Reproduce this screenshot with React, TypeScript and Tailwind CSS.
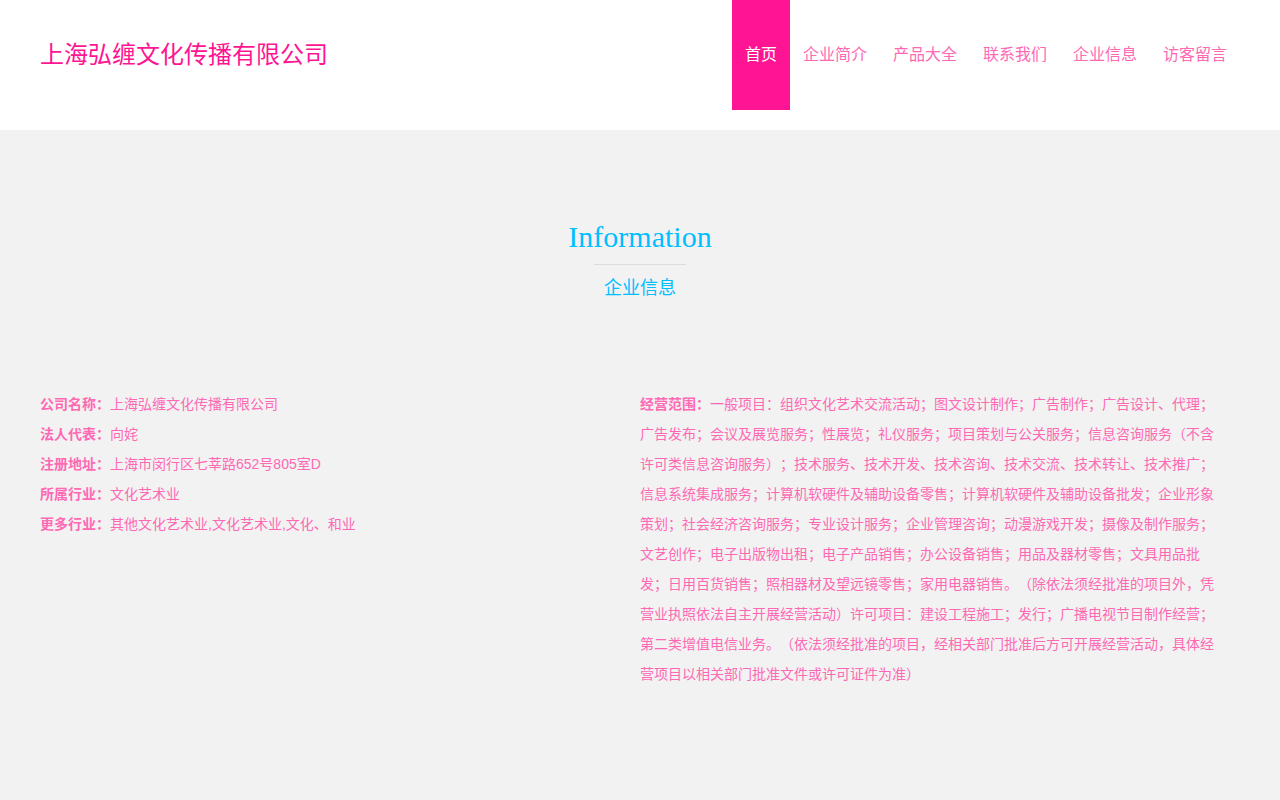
import React from "react";

const nav = ["首页", "企业简介", "产品大全", "联系我们", "企业信息", "访客留言"];

const info = [
  ["公司名称：", "上海弘缠文化传播有限公司"],
  ["法人代表：", "向姹"],
  ["注册地址：", "上海市闵行区七莘路652号805室D"],
  ["所属行业：", "文化艺术业"],
  ["更多行业：", "其他文化艺术业,文化艺术业,文化、和业"],
];

const scope =
  "一般项目：组织文化艺术交流活动；图文设计制作；广告制作；广告设计、代理；广告发布；会议及展览服务；性展览；礼仪服务；项目策划与公关服务；信息咨询服务（不含许可类信息咨询服务）；技术服务、技术开发、技术咨询、技术交流、技术转让、技术推广；信息系统集成服务；计算机软硬件及辅助设备零售；计算机软硬件及辅助设备批发；企业形象策划；社会经济咨询服务；专业设计服务；企业管理咨询；动漫游戏开发；摄像及制作服务；文艺创作；电子出版物出租；电子产品销售；办公设备销售；用品及器材零售；文具用品批发；日用百货销售；照相器材及望远镜零售；家用电器销售。（除依法须经批准的项目外，凭营业执照依法自主开展经营活动）许可项目：建设工程施工；发行；广播电视节目制作经营；第二类增值电信业务。（依法须经批准的项目，经相关部门批准后方可开展经营活动，具体经营项目以相关部门批准文件或许可证件为准）";

export default function App() {
  return (
    <div
      className="min-h-screen bg-[#f2f2f2] [text-spacing-trim:space-all]"
      style={{ fontFamily: '"Liberation Sans", "Noto Sans CJK SC", sans-serif' }}
    >
      <header className="h-[130px] bg-white">
        <div className="flex h-[110px] items-center justify-between px-[40px]">
          <a className="text-[24px] leading-none text-[#ff1493]">上海弘缠文化传播有限公司</a>
          <nav className="flex h-full">
            {nav.map((n, i) => (
              <a
                key={n}
                className={
                  i === 0
                    ? "flex h-full items-center bg-[#ff1493] px-[13px] text-[16px] text-white"
                    : "flex h-full items-center px-[13px] text-[16px] text-[#ff69b4]"
                }
              >
                {n}
              </a>
            ))}
          </nav>
        </div>
      </header>

      <section className="flex flex-col items-center pt-[89px]">
        <h2
          className="text-[30px] leading-[36px] text-[#00bfff]"
          style={{ fontFamily: '"Liberation Serif", serif' }}
        >
          Information
        </h2>
        <div className="mt-[9px] h-px w-[92px] bg-[#dddddd]" />
        <p className="mt-[11px] text-[18px] leading-[24px] text-[#00bfff]">企业信息</p>
      </section>

      <section className="flex px-[40px] pt-[89px] pb-[80px] text-[14px] leading-[30px] text-[#ff69b4]">
        <div className="w-[600px]">
          {info.map(([k, v]) => (
            <p key={k}>
              <b className="font-bold">{k}</b>
              {v}
            </p>
          ))}
        </div>
        <div className="w-[585px]">
          <p>
            <b className="font-bold">经营范围：</b>
            {scope}
          </p>
        </div>
      </section>
    </div>
  );
}
